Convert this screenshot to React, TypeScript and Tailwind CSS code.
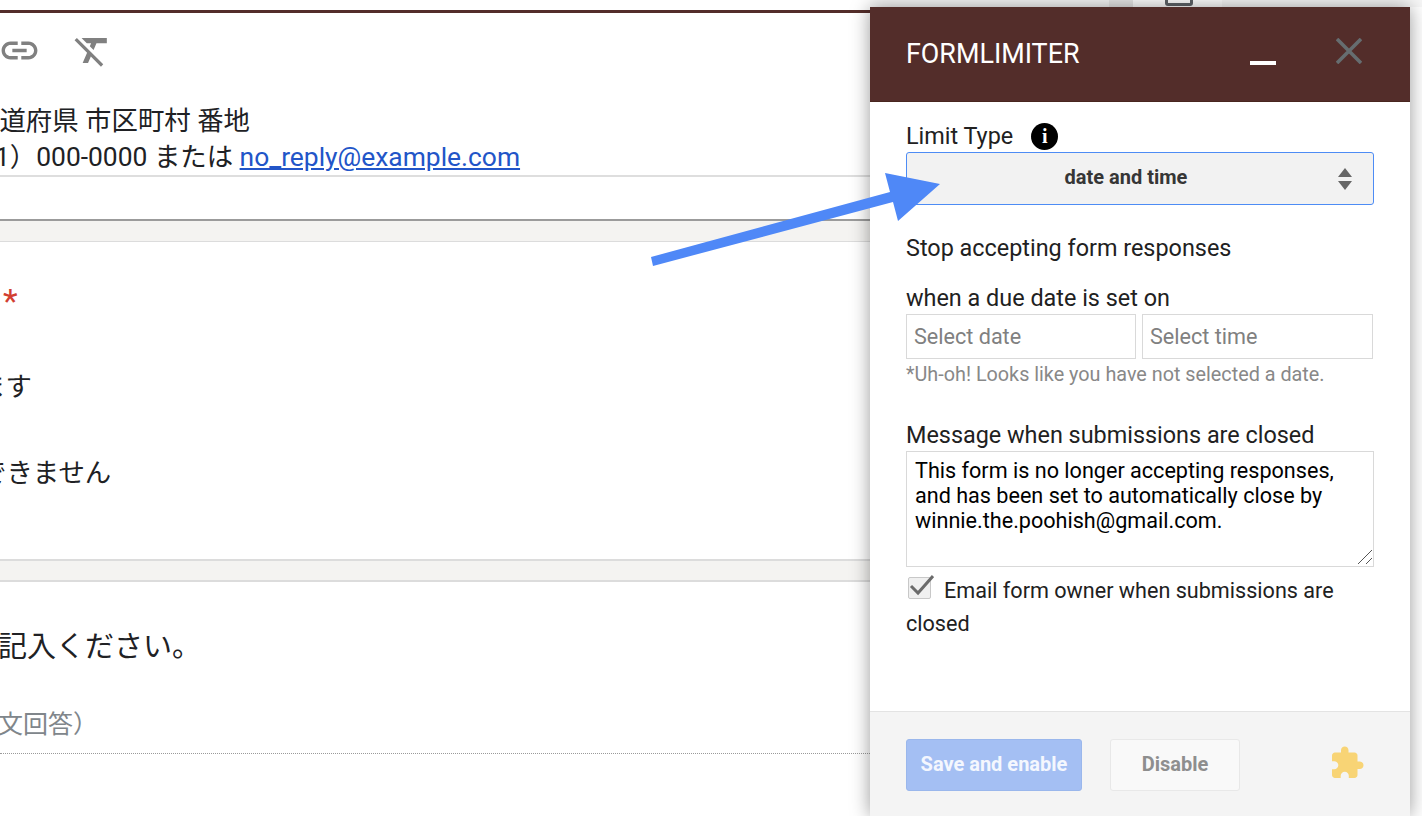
const FONT = "font-['Roboto','Noto_Sans_CJK_JP',sans-serif]";

function LinkIcon() {
  return (
    <svg viewBox="0 0 24 24" className="h-[43px] w-[43px] fill-[#808080]">
      <path d="M3.9 12c0-1.71 1.39-3.1 3.1-3.1h4V7H7c-2.76 0-5 2.24-5 5s2.24 5 5 5h4v-1.9H7c-1.71 0-3.1-1.39-3.1-3.1zM8 13h8v-2H8v2zm9-6h-4v1.9h4c1.71 0 3.1 1.39 3.1 3.1s-1.39 3.1-3.1 3.1h-4V17h4c2.76 0 5-2.24 5-5s-2.24-5-5-5z" />
    </svg>
  );
}

function ClearFormatIcon() {
  return (
    <svg viewBox="0 0 24 24" className="h-[43px] w-[43px] fill-[#808080]">
      <path d="M3.27 5L2 6.27l6.97 6.97L6.5 19h3l1.57-3.66L16.73 21 18 19.73 3.55 5.27 3.27 5zM6 5v.18L8.82 8h2.4l-.72 1.68 2.1 2.1L14.21 8H20V5H6z" />
    </svg>
  );
}

function PuzzleIcon() {
  return (
    <svg viewBox="0 0 24 24" className="h-[36px] w-[36px] fill-[#f8d475]">
      <path d="M20.5 11H19V7c0-1.1-.9-2-2-2h-4V3.5C13 2.12 11.88 1 10.5 1S8 2.12 8 3.5V5H4c-1.1 0-1.99.9-1.99 2v3.8H3.5c1.49 0 2.7 1.21 2.7 2.7s-1.21 2.7-2.7 2.7H2V20c0 1.1.9 2 2 2h3.8v-1.5c0-1.49 1.21-2.7 2.7-2.7 1.49 0 2.7 1.21 2.7 2.7V22H17c1.1 0 2-.9 2-2v-4h1.5c1.38 0 2.5-1.12 2.5-2.5S21.88 11 20.5 11z" />
    </svg>
  );
}

function DocumentPane() {
  return (
    <div className="flex h-[816px] w-[870px] flex-col overflow-hidden bg-white text-[#202124]">
      <div className="h-[10px] shrink-0" />
      <div className="h-[3px] shrink-0 bg-[#532d2a]" />

      <div className="-ml-[2px] flex h-[76px] shrink-0 items-center gap-[30px] pb-[1px]">
        <LinkIcon />
        <ClearFormatIcon />
      </div>

      <div className="h-[88px] shrink-0 border-b-2 border-[#dedede] text-[26.4px] leading-[36px]">
        <div className="-ml-[27px] mt-[14px] whitespace-nowrap">都道府県 市区町村 番地</div>
        <div className="-ml-[5px] whitespace-nowrap">
          1）000-0000 または{" "}
          <span className="text-[#2255c8] underline">no_reply@example.com</span>
        </div>
      </div>

      <div className="h-[42px] shrink-0" />
      <div className="h-[2px] shrink-0 bg-[#9b9b9b]" />
      <div className="h-[21px] shrink-0 border-b border-[#dcdcdc] bg-[#f4f3f1]" />

      <div className="h-[317px] shrink-0 text-[26.4px] leading-[36px]">
        <div className="mt-[41px] pl-[3px] text-[34px] leading-[36px] text-[#d23f31]">*</div>
        <div className="-ml-[21px] mt-[50px] whitespace-nowrap">ます</div>
        <div className="-ml-[20px] mt-[50px] whitespace-nowrap">できません</div>
      </div>

      <div className="h-[23px] shrink-0 border-y-2 border-[#dcdcdc] bg-[#f4f3f1]" />

      <div className="-ml-[2px] mt-[46px] whitespace-nowrap text-[29px] leading-[38px]">記入ください。</div>
      <div className="mt-[43px] border-b border-dotted border-[#9a9a9a] pb-[12px]">
        <div className="-ml-[27px] whitespace-nowrap text-[25px] leading-[32px] text-[#80868b]">本文回答）</div>
      </div>
    </div>
  );
}

function SidePanel() {
  return (
    <div className="relative z-10 flex h-[809px] w-[540px] flex-col bg-white text-[#212121] shadow-[0_0_18px_rgba(0,0,0,0.4)]">
      <div className="flex h-[95px] shrink-0 items-center justify-between border-b border-[#48261f] bg-[#532d2a] pl-[36px] pr-[48px]">
        <div className="text-[26.9px] text-white">FORMLIMITER</div>
        <div className="flex items-center gap-[60px]">
          <div className="mt-[18px] h-[4px] w-[26px] bg-white" />
          <svg viewBox="0 0 26 26" className="mb-[6px] h-[26px] w-[26px] stroke-[#666d70]" strokeWidth="3.6">
            <path d="M1 1L25 25M25 1L1 25" />
          </svg>
        </div>
      </div>

      <div className="flex-1 px-[36px] text-[23.4px]">
        <div className="mt-[20px] flex h-[28px] items-center gap-[18px] leading-[28px]">
          <span>Limit Type</span>
          <span className="flex h-[27px] w-[27px] items-center justify-center rounded-full bg-black font-['Liberation_Serif',serif] text-[20px] font-bold text-white">i</span>
        </div>
        <div className="relative mt-[2px] flex h-[53px] w-[468px] items-center justify-center rounded-[3px] border border-[#4d8cf5] bg-[#f2f2f2] pb-[4px] pr-[28px]">
          <span className="text-[20px] font-bold text-[#363636]">date and time</span>
          <svg viewBox="0 0 14 22" className="absolute right-[21px] top-[15px] h-[22px] w-[14px] fill-[#666666]">
            <path d="M7 0L14 9H0zM0 13H14L7 22z" />
          </svg>
        </div>

        <div className="mt-[28px] leading-[30px]">Stop accepting form responses</div>
        <div className="mt-[20px] leading-[30px]">when a due date is set on</div>

        <div className="mt-[1px] flex w-[467px] gap-[6px]">
          <input readOnly placeholder="Select date" className="h-[45px] w-[230px] border border-[#d9d9d9] px-[7px] text-[21.6px] outline-none placeholder:text-[#808080]" />
          <input readOnly placeholder="Select time" className="h-[45px] w-[231px] border border-[#d9d9d9] px-[7px] text-[21.6px] outline-none placeholder:text-[#808080]" />
        </div>
        <div className="mt-[4px] text-[19.8px] leading-[24px] text-[#888888]">*Uh-oh! Looks like you have not selected a date.</div>

        <div className="mt-[34px] leading-[28px]">Message when submissions are closed</div>
        <div className="relative mt-[2px] h-[116px] w-[468px]">
          <textarea
            readOnly
            className="block h-full w-full resize-none border border-[#d9d9d9] px-[8px] py-[6px] text-[21.6px] leading-[25px] text-black outline-none"
            value={"This form is no longer accepting responses, and has been set to automatically close by winnie.the.poohish@gmail.com."}
          />
          <svg viewBox="0 0 16 16" className="absolute bottom-[2px] right-[1px] h-[16px] w-[16px] fill-none stroke-[#555555]">
            <path d="M1 15L15 1M9 15L15 9" />
          </svg>
        </div>

        <div className="mt-[7px] text-[21.6px] leading-[33px]">
          <span className="relative ml-[2px] mr-[13px] inline-block h-[22px] w-[23px] rounded-[2px] border border-[#c8c8c8] bg-[#f0f0f0] align-[-1px]">
            <svg viewBox="0 0 26 26" className="absolute -left-[1px] -top-[4px] h-[26px] w-[26px] fill-none stroke-[#6b6b6b]" strokeWidth="3">
              <path d="M3 12L10 19L25 2" />
            </svg>
          </span>
          Email form owner when submissions are closed
        </div>
      </div>

      <div className="flex h-[105px] shrink-0 items-start border-t border-[#e3e3e3] bg-[#f4f4f4] pl-[36px] pr-[45px] pt-[27px]">
        <button className="h-[52px] w-[176px] rounded-[3px] border border-[#9ab7ec] bg-[#a4bff3] pb-[2px] text-[20px] font-bold text-[#f4f7fe]">Save and enable</button>
        <button className="ml-[28px] h-[52px] w-[130px] rounded-[3px] border border-[#e8e8e8] bg-[#f9f9f9] pb-[2px] text-[20px] font-bold text-[#8e8e8e]">Disable</button>
        <div className="ml-auto mt-[6px]"><PuzzleIcon /></div>
      </div>
    </div>
  );
}

export default function App() {
  return (
    <div className={`relative flex h-[816px] w-[1422px] overflow-hidden bg-white ${FONT}`}>
      <DocumentPane />
      <div className="flex w-[552px] flex-col">
        <div className="flex h-[7px] shrink-0 bg-[#f7f7f7]">
          <div className="ml-[239px] h-full w-[24px] bg-[#e8e8e8]" />
          <div className="flex h-full w-[89px] justify-center bg-white">
            <div className="-mt-[4px] ml-[2px] h-[10px] w-[28px] rounded-[3px] border-[3px] border-[#5f6368]" />
          </div>
        </div>
        <SidePanel />
      </div>

      {/* annotation arrow */}
      <svg viewBox="0 0 1422 816" className="pointer-events-none absolute left-0 top-0 z-20 h-[816px] w-[1422px] fill-[#4f88f7]">
        <path d="M651 257L890 192L885 173L940 184L898 221L893 202L653 266Z" />
      </svg>
    </div>
  );
}
